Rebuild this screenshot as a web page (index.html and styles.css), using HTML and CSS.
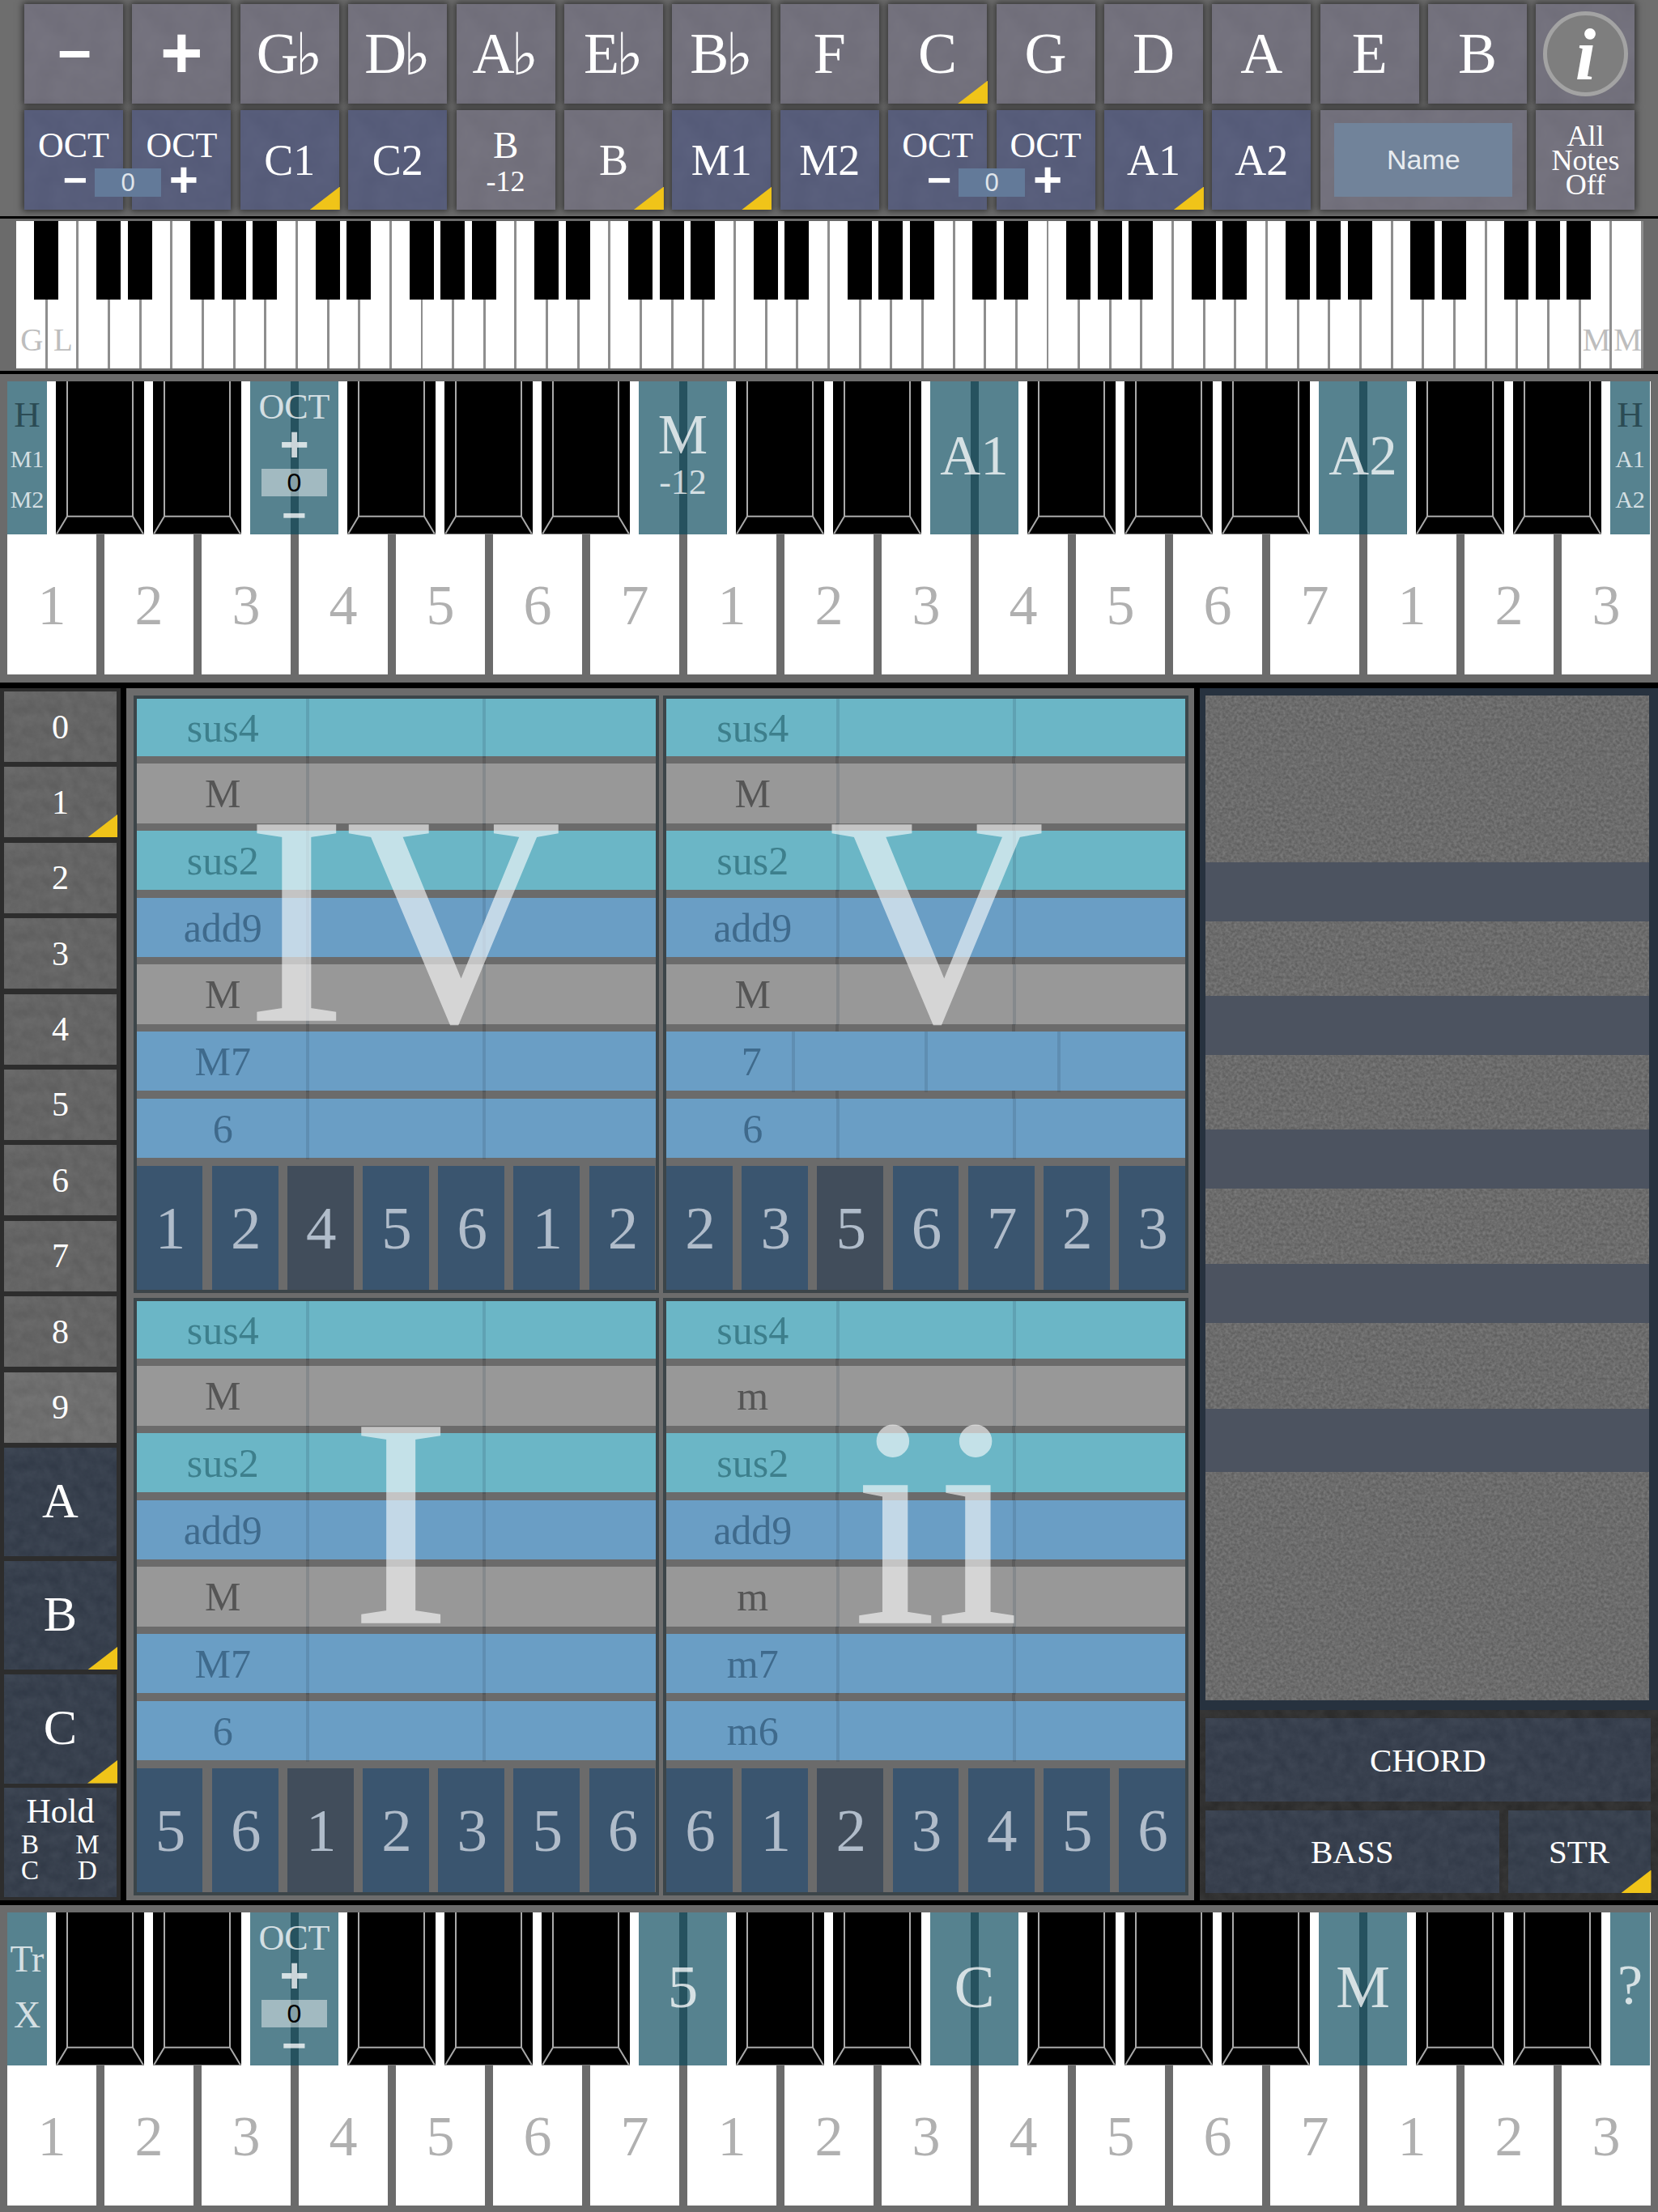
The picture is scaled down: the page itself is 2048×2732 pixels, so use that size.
FILE: index.html
```html
<!DOCTYPE html>
<html lang="en">
<head>
<meta charset="utf-8">
<title>Chord pad</title>
<link rel="stylesheet" href="styles.css">
</head>
<body>
<svg class="defs" width="0" height="0" aria-hidden="true">
  <symbol id="bevel" viewBox="0 0 109 189" preserveAspectRatio="none">
    <path d="M14 0V166.7H95V0M14 166.7L1 188.5M95 166.7L108 188.5" fill="none" stroke="#aaa" stroke-width="2"/>
    <path d="M0 188.5H109" fill="none" stroke="#777" stroke-width="1"/>
  </symbol>
</svg>

<header class="top">
  <div class="btn key"><span class="sym big-minus">−</span></div>
  <div class="btn key"><span class="sym big-plus">+</span></div>
  <div class="btn key">G<span class="flat">♭</span></div>
  <div class="btn key">D<span class="flat">♭</span></div>
  <div class="btn key">A<span class="flat">♭</span></div>
  <div class="btn key">E<span class="flat">♭</span></div>
  <div class="btn key">B<span class="flat">♭</span></div>
  <div class="btn key">F</div>
  <div class="btn key mark">C</div>
  <div class="btn key">G</div>
  <div class="btn key">D</div>
  <div class="btn key">A</div>
  <div class="btn key">E</div>
  <div class="btn key">B</div>
  <div class="btn"><div class="info">i</div></div>

  <div class="btn blue oct"><span class="oct-label">OCT</span><span class="sym oct-minus">−</span>
    <div class="oct-val">0</div></div>
  <div class="btn blue oct"><span class="oct-label">OCT</span><span class="sym oct-plus">+</span></div>
  <div class="btn blue mid mark">C1</div>
  <div class="btn blue mid">C2</div>
  <div class="btn stack"><span class="st-a">B</span><span class="st-b">-12</span></div>
  <div class="btn mid mark">B</div>
  <div class="btn blue mid mark">M1</div>
  <div class="btn blue mid">M2</div>
  <div class="btn blue oct"><span class="oct-label">OCT</span><span class="sym oct-minus">−</span>
    <div class="oct-val">0</div></div>
  <div class="btn blue oct"><span class="oct-label">OCT</span><span class="sym oct-plus">+</span></div>
  <div class="btn blue mid mark">A1</div>
  <div class="btn blue mid">A2</div>
  <div class="btn wide"><div class="name">Name</div></div>
  <div class="btn notes">All<br>Notes<br>Off</div>
</header>
<div class="rule r3"></div>

<section class="kb-wrap">
  <div class="kb">
    <div class="blacks">
      <i></i>
      <i class="s"></i><i></i><i class="s"></i><i></i><i></i>
      <i class="s"></i><i></i><i class="s"></i><i></i><i></i>
      <i class="s"></i><i></i><i class="s"></i><i></i><i></i>
      <i class="s"></i><i></i><i class="s"></i><i></i><i></i>
      <i class="s"></i><i></i><i class="s"></i><i></i><i></i>
      <i class="s"></i><i></i><i class="s"></i><i></i><i></i>
      <i class="s"></i><i></i><i class="s"></i><i></i><i></i>
    </div>
    <div class="kb-labels">
      <div class="kb-group"><span>G</span><span>L</span></div>
      <div class="kb-group"><span>M</span><span>M</span></div>
    </div>
  </div>
</section>
<div class="rule r4"></div>

<section class="keys upper">
  <div class="whites">
    <div class="wk">1</div><div class="wk">2</div><div class="wk">3</div><div class="wk">4</div><div class="wk">5</div><div class="wk">6</div><div class="wk">7</div>
    <div class="wk">1</div><div class="wk">2</div><div class="wk">3</div><div class="wk">4</div><div class="wk">5</div><div class="wk">6</div><div class="wk">7</div>
    <div class="wk">1</div><div class="wk">2</div><div class="wk">3</div>
  </div>
  <div class="over">
    <div class="tl side hm"><span class="h">H</span><span class="m m1">M1</span><span class="m m2">M2</span></div>
    <div class="bk"><svg><use href="#bevel"/></svg></div>
    <div class="bk"><svg><use href="#bevel"/></svg></div>
    <div class="tl octs"><span class="o-l">OCT</span><span class="sym o-p">+</span><span class="o-v">0</span><span class="sym o-m">−</span></div>
    <div class="bk"><svg><use href="#bevel"/></svg></div>
    <div class="bk"><svg><use href="#bevel"/></svg></div>
    <div class="bk"><svg><use href="#bevel"/></svg></div>
    <div class="tl m12"><span class="m12-a">M</span><span class="m12-b">-12</span></div>
    <div class="bk"><svg><use href="#bevel"/></svg></div>
    <div class="bk"><svg><use href="#bevel"/></svg></div>
    <div class="tl big">A1</div>
    <div class="bk"><svg><use href="#bevel"/></svg></div>
    <div class="bk"><svg><use href="#bevel"/></svg></div>
    <div class="bk"><svg><use href="#bevel"/></svg></div>
    <div class="tl big">A2</div>
    <div class="bk"><svg><use href="#bevel"/></svg></div>
    <div class="bk"><svg><use href="#bevel"/></svg></div>
    <div class="tl side hm"><span class="h">H</span><span class="m m1">A1</span><span class="m m2">A2</span></div>
  </div>
</section>

<main class="main">
  <aside class="presets">
    <div class="pre">0</div>
    <div class="pre mark">1</div>
    <div class="pre">2</div>
    <div class="pre">3</div>
    <div class="pre">4</div>
    <div class="pre">5</div>
    <div class="pre">6</div>
    <div class="pre">7</div>
    <div class="pre">8</div>
    <div class="pre light">9</div>
    <div class="bank first">A</div>
    <div class="bank mark">B</div>
    <div class="bank mark">C</div>
    <div class="bank hold">
      <span class="hold-t">Hold</span>
      <div class="hold-g"><span>B</span><span>M</span><span>C</span><span>D</span></div>
    </div>
  </aside>

  <div class="chords">
    <div class="panel">
      <div class="rows">
        <div class="row teal first"><span>sus4</span><span></span><span></span></div>
        <div class="row gray"><span>M</span><span></span><span></span></div>
        <div class="row teal"><span>sus2</span><span></span><span></span></div>
        <div class="row blue2"><span>add9</span><span></span><span></span></div>
        <div class="row gray"><span>M</span><span></span><span></span></div>
        <div class="row blue2"><span>M7</span><span></span><span></span></div>
        <div class="row blue2"><span>6</span><span></span><span></span></div>
      </div>
      <div class="digits"><span>1</span><span>2</span><span class="cur">4</span><span>5</span><span>6</span><span>1</span><span>2</span></div>
      <div class="num n-iv">IV</div>
    </div>
    <div class="panel">
      <div class="rows">
        <div class="row teal first"><span>sus4</span><span></span><span></span></div>
        <div class="row gray"><span>M</span><span></span><span></span></div>
        <div class="row teal"><span>sus2</span><span></span><span></span></div>
        <div class="row blue2"><span>add9</span><span></span><span></span></div>
        <div class="row gray"><span>M</span><span></span><span></span></div>
        <div class="row blue2 four"><span>7</span><span></span><span></span><span></span></div>
        <div class="row blue2"><span>6</span><span></span><span></span></div>
      </div>
      <div class="digits"><span>2</span><span>3</span><span class="cur">5</span><span>6</span><span>7</span><span>2</span><span>3</span></div>
      <div class="num n-v">V</div>
    </div>
    <div class="panel">
      <div class="rows">
        <div class="row teal first"><span>sus4</span><span></span><span></span></div>
        <div class="row gray"><span>M</span><span></span><span></span></div>
        <div class="row teal"><span>sus2</span><span></span><span></span></div>
        <div class="row blue2"><span>add9</span><span></span><span></span></div>
        <div class="row gray"><span>M</span><span></span><span></span></div>
        <div class="row blue2"><span>M7</span><span></span><span></span></div>
        <div class="row blue2"><span>6</span><span></span><span></span></div>
      </div>
      <div class="digits"><span>5</span><span>6</span><span class="cur">1</span><span>2</span><span>3</span><span>5</span><span>6</span></div>
      <div class="num n-i">I</div>
    </div>
    <div class="panel">
      <div class="rows">
        <div class="row teal first"><span>sus4</span><span></span><span></span></div>
        <div class="row gray"><span>m</span><span></span><span></span></div>
        <div class="row teal"><span>sus2</span><span></span><span></span></div>
        <div class="row blue2"><span>add9</span><span></span><span></span></div>
        <div class="row gray"><span>m</span><span></span><span></span></div>
        <div class="row blue2"><span>m7</span><span></span><span></span></div>
        <div class="row blue2"><span>m6</span><span></span><span></span></div>
      </div>
      <div class="digits"><span>6</span><span>1</span><span class="cur">2</span><span>3</span><span>4</span><span>5</span><span>6</span></div>
      <div class="num n-ii">ii</div>
    </div>
  </div>

  <aside class="strings">
    <div class="tracks">
      <div class="tr h205"></div><div class="band"></div>
      <div class="tr h92"></div><div class="band"></div>
      <div class="tr h92"></div><div class="band"></div>
      <div class="tr h93"></div><div class="band"></div>
      <div class="tr h106"></div><div class="band b78"></div>
      <div class="tr rest"></div>
    </div>
    <div class="modes">
      <div class="mode chord">CHORD</div>
      <div class="mode-row">
        <div class="mode bass">BASS</div>
        <div class="mode str mark">STR</div>
      </div>
    </div>
  </aside>
</main>

<section class="keys lower">
  <div class="whites">
    <div class="wk">1</div><div class="wk">2</div><div class="wk">3</div><div class="wk">4</div><div class="wk">5</div><div class="wk">6</div><div class="wk">7</div>
    <div class="wk">1</div><div class="wk">2</div><div class="wk">3</div><div class="wk">4</div><div class="wk">5</div><div class="wk">6</div><div class="wk">7</div>
    <div class="wk">1</div><div class="wk">2</div><div class="wk">3</div>
  </div>
  <div class="over">
    <div class="tl side trx"><span class="tr-t">Tr</span><span class="tr-x">X</span></div>
    <div class="bk"><svg><use href="#bevel"/></svg></div>
    <div class="bk"><svg><use href="#bevel"/></svg></div>
    <div class="tl octs"><span class="o-l">OCT</span><span class="sym o-p">+</span><span class="o-v">0</span><span class="sym o-m">−</span></div>
    <div class="bk"><svg><use href="#bevel"/></svg></div>
    <div class="bk"><svg><use href="#bevel"/></svg></div>
    <div class="bk"><svg><use href="#bevel"/></svg></div>
    <div class="tl big large">5</div>
    <div class="bk"><svg><use href="#bevel"/></svg></div>
    <div class="bk"><svg><use href="#bevel"/></svg></div>
    <div class="tl big large">C</div>
    <div class="bk"><svg><use href="#bevel"/></svg></div>
    <div class="bk"><svg><use href="#bevel"/></svg></div>
    <div class="bk"><svg><use href="#bevel"/></svg></div>
    <div class="tl big large">M</div>
    <div class="bk"><svg><use href="#bevel"/></svg></div>
    <div class="bk"><svg><use href="#bevel"/></svg></div>
    <div class="tl side q">?</div>
  </div>
</section>
</body>
</html>
```
FILE: styles.css
```css
:root {
  --soft: url("data:image/svg+xml,%3Csvg xmlns='http://www.w3.org/2000/svg' width='300' height='300'%3E%3Cfilter id='n' color-interpolation-filters='sRGB'%3E%3CfeTurbulence type='fractalNoise' baseFrequency='.03' numOctaves='3' seed='3'/%3E%3CfeColorMatrix values='1.4 0 0 0 -.2 1.4 0 0 0 -.2 1.4 0 0 0 -.2 0 0 0 0 .025'/%3E%3C/filter%3E%3Crect width='300' height='300' filter='url(%23n)'/%3E%3C/svg%3E");
  --mottle: url("data:image/svg+xml,%3Csvg xmlns='http://www.w3.org/2000/svg' width='300' height='300'%3E%3Cfilter id='m' color-interpolation-filters='sRGB'%3E%3CfeTurbulence type='fractalNoise' baseFrequency='.07' numOctaves='4' seed='5'/%3E%3CfeColorMatrix values='1.5 0 0 0 -.25 1.5 0 0 0 -.25 1.5 0 0 0 -.25 0 0 0 0 .045'/%3E%3C/filter%3E%3Crect width='300' height='300' filter='url(%23m)'/%3E%3C/svg%3E");
  --fine: url("data:image/svg+xml,%3Csvg xmlns='http://www.w3.org/2000/svg' width='400' height='400'%3E%3Cfilter id='f' color-interpolation-filters='sRGB'%3E%3CfeTurbulence type='fractalNoise' baseFrequency='.28' numOctaves='2' seed='7'/%3E%3CfeColorMatrix values='1.8 0 0 0 -.4 1.8 0 0 0 -.4 1.8 0 0 0 -.4 0 0 0 0 .1'/%3E%3C/filter%3E%3Crect width='400' height='400' filter='url(%23f)'/%3E%3C/svg%3E");
}

* { box-sizing: border-box; }

html, body { margin: 0; padding: 0; }

body {
  width: 2048px;
  height: 2732px;
  overflow: hidden;
  background: #6b6b6b;
  font-family: "Liberation Serif", "Times New Roman", serif;
  color: #fff;
}

.defs { position: absolute; }

.sym { font-family: "Liberation Sans", Arial, sans-serif; font-weight: 700; }

/* top control strip */
.top {
  height: 267px;
  padding: 5px 27px 0 30px;
  display: grid;
  grid-template-columns: repeat(15, 122px);
  grid-template-rows: 123px 123px;
  column-gap: 11.4px;
  row-gap: 8px;
  background: #6e6e6e;
}

.btn {
  position: relative;
  display: flex;
  align-items: center;
  justify-content: center;
  background-color: #72707c;
  background-image: var(--soft);
  box-shadow: 0 0 8px 2px rgba(0, 0, 0, .55);
}

.btn.blue { background-color: #565c7a; }

.mark::after {
  content: "";
  position: absolute;
  right: -1px;
  bottom: 0;
  width: 37px;
  height: 28.5px;
  background: #f0c419;
  clip-path: polygon(100% 0, 100% 100%, 0 100%);
}

.key { font-size: 72px; }
.flat { font-family: "DejaVu Sans", sans-serif; font-size: 72px; margin-left: -4px; }
.big-minus { font-size: 73px; padding: 0 0 3px 2px; }
.big-plus { font-size: 90px; padding-bottom: 3px; }

.info {
  width: 105px;
  height: 105px;
  border: 5px solid #a3a3a3;
  border-radius: 50%;
  background: #7e7e7e;
  display: flex;
  align-items: center;
  justify-content: center;
  font-size: 92px;
  font-weight: 700;
  font-style: italic;
}

.oct { flex-direction: column; justify-content: flex-start; }
.oct-label { font-size: 44px; line-height: 44px; margin-top: 22px; }
.oct-minus { font-size: 52px; line-height: 40px; margin-left: 4px; }
.oct-plus { font-size: 62px; line-height: 40px; margin-left: 5px; }
.oct-val {
  position: absolute;
  left: 87px;
  top: 72px;
  width: 82px;
  height: 35px;
  z-index: 2;
  background: #637a99;
  color: #dfe4ea;
  font: 31px/35px "Liberation Sans", Arial, sans-serif;
  text-align: center;
}

.mid { font-size: 54px; }

.stack { flex-direction: column; }
.st-a { font-size: 47px; line-height: 46px; margin-bottom: 7px; }
.st-b { font-size: 36px; line-height: 30px; }

.wide { grid-column: span 2; }
.name {
  width: 220px;
  height: 91px;
  background: #71839a;
  color: #e8ecf0;
  font: 34px/91px "Liberation Sans", Arial, sans-serif;
  text-align: center;
}

.notes { font-size: 36px; line-height: 30px; text-align: center; }

.rule { background: #000; }
.r3 { height: 3px; }
.r4 { height: 4px; }

/* full piano */
.kb-wrap { height: 188px; padding: 3px 0 0 20px; }
.kb {
  position: relative;
  width: 2010px;
  height: 181.5px;
  background: repeating-linear-gradient(to right, #fff 0, #fff 35.7px, #8e8e8e 35.7px, #8e8e8e 38.65px);
}
.blacks { position: absolute; left: 22px; top: 0; display: flex; gap: 8.65px; }
.blacks i { width: 30px; height: 97px; background: #000; }
.blacks .s { margin-left: 38.65px; }
.kb-labels {
  position: absolute;
  left: 0;
  right: 0;
  top: 127px;
  display: flex;
  justify-content: space-between;
  color: #bdbdbd;
  font-size: 39px;
  line-height: 39px;
}
.kb-group { display: flex; }
.kb-group span { width: 38.65px; text-align: center; }

/* scale keyboards */
.keys { position: relative; padding-left: 9px; }
.upper { height: 381px; padding-top: 9px; }
.lower { height: 379px; padding-top: 8.7px; }

.whites { display: flex; gap: 10px; }
.wk {
  width: 110px;
  height: 362px;
  padding-top: 189px;
  background: #fff;
  color: #b0b0b0;
  font-size: 70px;
  line-height: 176px;
  text-align: center;
}

.over {
  position: absolute;
  left: 9px;
  display: flex;
  gap: 11px;
  height: 189px;
}
.upper .over { top: 9px; }
.lower .over { top: 8.7px; }

.bk { width: 109px; background: #000; }
.bk svg { display: block; width: 100%; height: 100%; }

.tl {
  width: 109px;
  display: flex;
  flex-direction: column;
  align-items: center;
  background: rgba(6, 71, 90, .68);
  color: rgba(255, 255, 255, .76);
}
.side { width: 49px; }

.hm .h { font-size: 45px; line-height: 45px; margin-top: 19px; color: #2b4b54; }
.hm .m { font-size: 30px; line-height: 30px; }
.hm .m1 { margin-top: 17px; }
.hm .m2 { margin-top: 20px; }

.trx span { font-size: 46px; line-height: 46px; }
.tr-t { margin-top: 35px; }
.tr-x { margin-top: 23px; }

.q { justify-content: center; font-size: 70px; padding-bottom: 8px; }

.o-l { font-size: 44px; line-height: 44px; margin-top: 10px; }
.o-p { font-size: 62px; line-height: 44px; margin-top: 2px; }
.o-v {
  width: 81px;
  height: 34px;
  margin-top: 8px;
  background: rgba(255, 255, 255, .45);
  color: #000;
  font: 32px/34px "Liberation Sans", Arial, sans-serif;
  text-align: center;
}
.o-m { font-size: 52px; line-height: 28px; margin-top: 8.5px; }

.big { justify-content: center; font-size: 69px; padding-bottom: 5px; }
.large { font-size: 75px; }

.m12-a { font-size: 69px; line-height: 69px; margin-top: 32px; }
.m12-b { font-size: 44px; line-height: 44px; margin-top: 2px; }

/* middle */
.main {
  height: 1510px;
  padding: 7px 0 6px;
  display: flex;
  gap: 7px;
  background: #000;
}

.presets {
  width: 149px;
  padding: 4px 5px 0;
  display: flex;
  flex-direction: column;
  background: #2d2d2d;
}
.pre {
  position: relative;
  flex: none;
  height: 87px;
  margin-bottom: 6.4px;
  display: flex;
  align-items: center;
  justify-content: center;
  background-color: #636363;
  background-image: var(--mottle);
  font-size: 42px;
}
.pre.light { background-color: #6d6d6d; margin-bottom: 6px; }
.bank {
  position: relative;
  flex: none;
  height: 134.8px;
  margin-bottom: 5.3px;
  padding-bottom: 3px;
  display: flex;
  align-items: center;
  justify-content: center;
  background-color: #343d4b;
  background-image: var(--mottle);
  font-size: 62px;
}
.hold { flex-direction: column; justify-content: flex-start; padding-bottom: 0; }
.hold-t { font-size: 42px; line-height: 42px; margin-top: 8px; }
.hold-g {
  margin-top: 4px;
  display: grid;
  grid-template-columns: 64px 64px;
  column-gap: 7px;
  justify-items: center;
  font-size: 33px;
  line-height: 32px;
  align-self: flex-start;
}

.chords {
  width: 1319px;
  padding: 9px 0 0 8.5px;
  display: grid;
  grid-template-columns: 649px 649px;
  grid-template-rows: 738px 738px;
  column-gap: 5.5px;
  row-gap: 6px;
  background: #6c6c6c;
}

.panel {
  position: relative;
  border: 4px solid #3c4549;
  background: #6b6b6b;
}

.rows {
  display: flex;
  flex-direction: column;
  gap: 9.4px;
  background: linear-gradient(to right,
    transparent 209.5px, #5d5d5d 209.5px, #5d5d5d 213.5px,
    transparent 213.5px, transparent 427.5px,
    #5d5d5d 427.5px, #5d5d5d 431.5px, transparent 431.5px);
}

.row {
  height: 73.3px;
  display: grid;
  grid-template-columns: 213.5px 218px 1fr;
  font-size: 50px;
  line-height: 75px;
  text-align: center;
}
.row.first { height: 71px; line-height: 73px; }
.row span { border-right: 4px solid rgba(40, 60, 80, .16); }
.row span:first-child { padding-left: 4px; }
.row span:last-child { border-right: 0; }

.row.teal { background: #6bb6c6; color: #3d7f8c; }
.row.gray { background: #989898; color: #555; }
.row.blue2 { background: #6a9ec5; color: #3f6a8c; }

.row.four { grid-template-columns: 158.5px 164px 164px 1fr; }
.row.four span:first-child { padding-left: 56px; }

.digits {
  margin-top: 9.4px;
  height: 153.5px;
  display: grid;
  grid-template-columns: repeat(7, 1fr);
  column-gap: 11.2px;
}
.digits span {
  background: #3a556f;
  color: #b0bcca;
  font-size: 75px;
  line-height: 153.5px;
  text-align: center;
  padding-left: 2px;
}
.digits .cur { background: #414d5b; }

.num {
  position: absolute;
  top: 93px;
  width: 641px;
  color: #fff;
  opacity: .6;
  -webkit-text-stroke: 1.5px #fff;
  font-size: 368px;
  line-height: 360px;
  text-align: center;
  pointer-events: none;
}
.n-iv { left: 10px; }
.n-v { left: 13.5px; }
.n-i { left: 6px; }
.n-ii { left: 13px; }

/* right column */
.strings {
  width: 566px;
  display: flex;
  flex-direction: column;
  background: #27323f;
}
.tracks {
  flex: none;
  height: 1262px;
  margin: 0 11px 0 7px;
  padding: 9px 0 12px;
  display: flex;
  flex-direction: column;
}
.tr { background-color: #6a6a6a; background-image: var(--fine); }
.h205 { height: 205.5px; }
.h92 { height: 92px; }
.h93 { height: 93px; }
.h106 { height: 106px; }
.rest { flex: 1; }
.band { height: 73px; background: #4c5360; }
.b78 { height: 78px; }

.modes {
  flex: 1;
  padding: 10px 9.5px 9px 7px;
  display: flex;
  flex-direction: column;
  gap: 11px;
  background-color: #2d2d2d;
  background-image: var(--mottle);
}
.mode {
  position: relative;
  display: flex;
  align-items: center;
  justify-content: center;
  background-color: #343d4b;
  background-image: var(--mottle);
  font-size: 41px;
}
.chord { height: 103px; }
.mode-row { height: 102px; display: flex; gap: 11px; }
.bass { width: 362.6px; }
.str { flex: 1; }
```
